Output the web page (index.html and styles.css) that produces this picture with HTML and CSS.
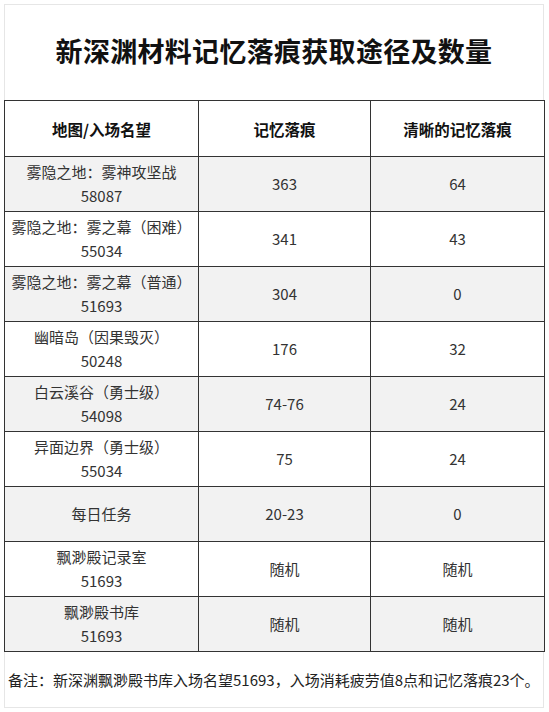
FILE: index.html
```html
<!DOCTYPE html>
<html lang="zh-CN">
<head>
<meta charset="utf-8">
<title>新深渊材料记忆落痕获取途径及数量</title>
<link rel="stylesheet" href="styles.css">
</head>
<body>
<div class="sheet">
  <div class="title-row">
    <h1 class="title">新深渊材料记忆落痕获取途径及数量</h1>
  </div>
  <table class="data">
    <colgroup>
      <col class="c1"><col class="c2"><col class="c3">
    </colgroup>
    <thead>
      <tr class="head"><th>地图/入场名望</th><th>记忆落痕</th><th>清晰的记忆落痕</th></tr>
    </thead>
    <tbody>
      <tr class="shade"><td>雾隐之地：雾神攻坚战<br>58087</td><td>363</td><td>64</td></tr>
      <tr><td>雾隐之地：雾之幕（困难）<br>55034</td><td>341</td><td>43</td></tr>
      <tr class="shade"><td>雾隐之地：雾之幕（普通）<br>51693</td><td>304</td><td>0</td></tr>
      <tr><td>幽暗岛（因果毁灭）<br>50248</td><td>176</td><td>32</td></tr>
      <tr class="shade"><td>白云溪谷（勇士级）<br>54098</td><td>74-76</td><td>24</td></tr>
      <tr><td>异面边界（勇士级）<br>55034</td><td>75</td><td>24</td></tr>
      <tr class="shade"><td>每日任务</td><td>20-23</td><td>0</td></tr>
      <tr><td>飘渺殿记录室<br>51693</td><td>随机</td><td>随机</td></tr>
      <tr class="shade"><td>飘渺殿书库<br>51693</td><td>随机</td><td>随机</td></tr>
    </tbody>
  </table>
  <div class="note-row">
    <p class="note">备注：新深渊飘渺殿书库入场名望51693，入场消耗疲劳值8点和记忆落痕23个。</p>
  </div>
</div>
</body>
</html>
```
FILE: styles.css
```css
html, body {
  margin: 0;
  padding: 0;
  background: #ffffff;
}
body {
  font-family: "Noto Sans CJK SC", "Noto Sans", sans-serif;
  color: #2a2a2a;
}
.sheet {
  width: 549px;
  height: 712px;
  padding: 4px 5px 0 4px;
  box-sizing: border-box;
  overflow: hidden;
}
.title-row {
  height: 96px;
  border-top: 1px solid #e6e6e6;
  border-left: 1px solid #e6e6e6;
  border-right: 1px solid #e6e6e6;
  box-sizing: border-box;
  display: flex;
  align-items: center;
  justify-content: center;
  padding-bottom: 4px;
}
.title {
  margin: 0;
  font-size: 27px;
  font-weight: 700;
  color: #111;
  letter-spacing: 0.3px;
  line-height: 1;
}
.data {
  width: 540px;
  border-collapse: collapse;
  table-layout: fixed;
}
.c1 { width: 194px; }
.c2 { width: 172px; }
.c3 { width: 174px; }
.data th, .data td {
  border: 1px solid #333;
  text-align: center;
  vertical-align: middle;
  padding: 0;
  font-size: 15px;
  line-height: 24px;
}
.data th {
  height: 55px;
  font-weight: 700;
  color: #111;
  font-size: 15.5px;
}
.data td {
  height: 54px;
  color: #333;
}
.shade td {
  background: #f2f2f2;
}
.note-row {
  height: 56px;
  border-left: 1px solid #e6e6e6;
  border-right: 1px solid #e6e6e6;
  border-bottom: 1px solid #e6e6e6;
  box-sizing: border-box;
  display: flex;
  align-items: center;
  padding-left: 3px;
}
.note {
  margin: 0;
  font-size: 15px;
  color: #222;
  white-space: nowrap;
}
```
